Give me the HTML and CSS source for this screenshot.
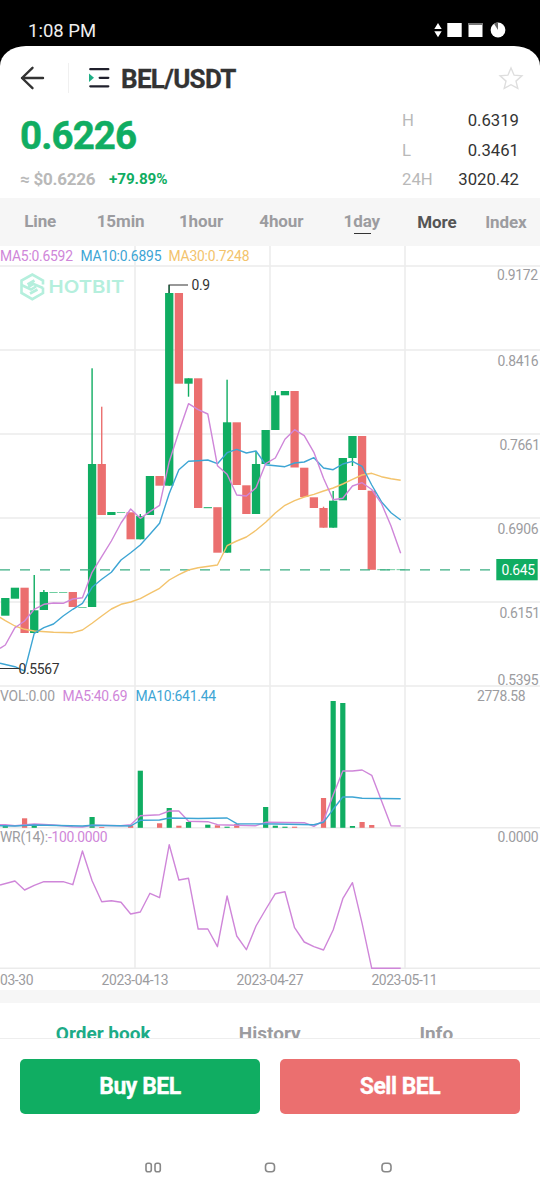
FILE: index.html
```html
<!DOCTYPE html>
<html lang="en">
<head>
    <meta charset="UTF-8">
    <meta name="viewport" content="width=device-width, initial-scale=1.0">
    <title>BEL/USDT</title>
    <link rel="stylesheet" href="styles.css">
</head>
<body>
    <div class="status-bar">
        <span>1:08 PM</span>
        <svg width="76" height="18" viewBox="432 21 76 18" fill="#fff">
            <path d="M438 23l3.7 6h-7.4zM438 37.2l3.7-6h-7.4z"/>
            <rect x="447.3" y="23" width="14.4" height="14"/>
            <rect x="468.5" y="23" width="14" height="14"/>
            <rect x="468.5" y="23" width="14" height="2" fill="#777"/>
            <circle cx="498" cy="30" r="7.4"/>
            <path d="M498 30v-7.4a7.4 7.4 0 0 0-4 1.2z" fill="#666"/>
        </svg>
    </div>

    <div class="page">
        <div class="header">
            <svg class="back" width="26" height="26" viewBox="20 65 26 26">
                <path d="M43 78H22M32.5 67.8L22 78l10.500 10.200" fill="none" stroke="#333" stroke-width="2.400" stroke-linecap="round" stroke-linejoin="round"/>
            </svg>
            <span class="divider"></span>
            <svg class="list-icon" width="22" height="22" viewBox="88 67 22 22">
                <path d="M90.300 69.200h18M99.700 77.800h8.600M90.300 86.300h18" stroke="#20202c" stroke-width="2.300" stroke-linecap="round"/>
                <path d="M89 73.500l5 4.300-5 4.300z" fill="#1fae85"/>
            </svg>
            <h1>BEL/USDT</h1>
            <svg class="star" width="26" height="26" viewBox="498 65 26 26">
                <path d="M511 68l3.100 7.200 7.800.7-5.900 5.200 1.800 7.200-6.800-3.600-6.800 3.600 1.800-7.200-5.900-5.200 7.800-.7z" fill="none" stroke="#dedede" stroke-width="1.400"/>
            </svg>
        </div>

        <div class="ticker">
            <div>
                <div class="price">0.6226</div>
                <div class="change"><span class="usd">≈ $0.6226</span><span class="percent">+79.89%</span></div>
            </div>
            <div class="stats">
                <div><span>H</span><b>0.6319</b></div>
                <div><span>L</span><b>0.3461</b></div>
                <div><span>24H</span><b>3020.42</b></div>
            </div>
        </div>

        <div class="periods">
            <span>Line</span>
            <span>15min</span>
            <span>1hour</span>
            <span>4hour</span>
            <span class="active">1day</span>
            <span class="more">More</span>
            <span class="index">Index</span>
        </div>

        <svg class="chart" width="540" height="744" viewBox="0 246 540 744">
            <g class="grid">
                <path d="M0 266H540M0 350H540M0 434H540M0 518H540M0 602H540M0 686H540M0 827.800H540M0 968.300H540"/>
                <path d="M135 246V968M270 246V968M405 246V968"/>
            </g>

            <g class="logo">
                <path d="M43 284.500V280.500L32.300 274.500 21.500 280.500V293L32.300 299.200 43 293V287.500"/>
                <path d="M21.500 285L31 289.500 36 286.500M27.500 284.500L34.500 280.500M43 288L33.500 284 28.500 287M37.500 289.500L30 293.500"/>
                <text x="48.500" y="293.300" textLength="76" lengthAdjust="spacingAndGlyphs">HOTBIT</text>
            </g>

            <g id="candles"></g>
            <g id="volumes"></g>
            <path class="current" d="M0 569.800H490"/>
            <g id="lines"></g>

            <path class="mark" d="M169 293V285H188M0 668.500H19"/>
            <text class="mark-text" x="191.500" y="290" textLength="18.500">0.9</text>
            <text class="mark-text" x="18.500" y="673.800" textLength="41">0.5567</text>

            <text class="purple" x="0" y="261.200" textLength="73">MA5:0.6592</text>
            <text class="blue" x="80.500" y="261.200" textLength="81">MA10:0.6895</text>
            <text class="yellow" x="168.500" y="261.200" textLength="81">MA30:0.7248</text>

            <text x="497" y="280" textLength="41">0.9172</text>
            <text x="497.500" y="366.300" textLength="41">0.8416</text>
            <text x="499.500" y="450.300" textLength="40.500">0.7661</text>
            <text x="497.500" y="534.300" textLength="41">0.6906</text>
            <text x="499.500" y="618.300" textLength="40.500">0.6151</text>
            <text x="497.500" y="685.300" textLength="41">0.5395</text>
            <rect class="tag" x="496.300" y="559" width="41.400" height="21.300"/>
            <text class="tag-text" x="501.500" y="575" textLength="33.500">0.645</text>

            <text x="0" y="701.300" textLength="55">VOL:0.00</text>
            <text class="purple" x="62.500" y="701.300" textLength="65">MA5:40.69</text>
            <text class="blue" x="135.500" y="701.300" textLength="80.500">MA10:641.44</text>
            <text x="477" y="701.300" textLength="48.500">2778.58</text>

            <text x="0" y="841.500" textLength="48">WR(14):</text>
            <text class="purple" x="48" y="841.500" textLength="59.500">-100.0000</text>
            <text x="497.500" y="841.500" textLength="41">0.0000</text>

            <text x="0" y="984.500" textLength="33.500">03-30</text>
            <text x="101.500" y="984.500" textLength="67">2023-04-13</text>
            <text x="236.500" y="984.500" textLength="67">2023-04-27</text>
            <text x="371.500" y="984.500" textLength="66">2023-05-11</text>
        </svg>

        <div class="tabs">
            <span class="active">Order book</span>
            <span>History</span>
            <span>Info</span>
        </div>

        <div class="actions">
            <button class="buy">Buy BEL</button>
            <button class="sell">Sell BEL</button>
        </div>

        <svg class="nav-bar" width="540" height="20" viewBox="0 1157 540 20">
            <rect x="146" y="1163.300" width="5.300" height="8.400" rx="2"/>
            <rect x="155" y="1163.300" width="5.300" height="8.400" rx="2"/>
            <rect x="265.500" y="1163.300" width="9" height="8.400" rx="3"/>
            <rect x="382" y="1163.300" width="9" height="8.400" rx="3"/>
        </svg>
    </div>

    <script src="chart.js"></script>
</body>
</html>
```

FILE: styles.css
```css
* { box-sizing: border-box; }
body {
    margin: 0;
    width: 540px;
    height: 1200px;
    overflow: hidden;
    background: #000;
    font-family: Roboto, sans-serif;
    color: #333;
}
svg { display: block; flex: none; }
.status-bar {
    height: 46px;
    padding: 15px 32px 0 28px;
    display: flex;
    justify-content: space-between;
    color: #eee;
    font-size: 18.5px;
    line-height: 32px;
}
.status-bar svg { margin-top: 6px; }
.page {
    height: 1154px;
    background: #fff;
    border-radius: 26px 26px 0 0 / 20px 20px 0 0;
    overflow: hidden;
}
.header {
    height: 62px;
    padding: 2px 16px 0 20px;
    display: flex;
    align-items: center;
}
.divider { width: 1px; height: 30px; margin: 0 19px 0 22px; background: #f0f0f0; }
.header h1 {
    flex: 1;
    margin: 2px 0 0 11px;
    font-size: 26px;
    line-height: 32px;
    letter-spacing: -0.7px;
    -webkit-text-stroke: 0.3px;
}
.ticker {
    height: 90px;
    padding: 0 21px 0 20px;
    display: flex;
    justify-content: space-between;
}
.price {
    margin-top: 5px;
    color: #10ad62;
    font-size: 38.5px;
    font-weight: bold;
    line-height: 46px;
    letter-spacing: -0.9px;
    -webkit-text-stroke: 0.5px;
}
.change { display: flex; margin-top: 8px; font-weight: bold; line-height: 24px; }
.usd { width: 89px; color: #b9b9b9; font-size: 17px; letter-spacing: -0.25px; white-space: nowrap; }
.percent { color: #10ad62; font-size: 15.3px; letter-spacing: -0.1px; line-height: 25px; }
.stats { width: 117px; }
.stats div {
    display: flex;
    justify-content: space-between;
    height: 29.5px;
    line-height: 25px;
    font-size: 16.7px;
}
.stats span { color: #b9b9b9; }
.stats b { font-weight: normal; }
.periods {
    height: 48px;
    padding-top: 2px;
    display: flex;
    background: #f6f6f6;
    color: #9c9ca0;
    font-size: 17px;
    font-weight: bold;
    line-height: 42px;
    letter-spacing: -0.1px;
    text-align: center;
}
.periods span { width: 80.4px; }
.periods .active { position: relative; }
.periods .active::after {
    content: "";
    position: absolute;
    left: 32px;
    bottom: 12px;
    width: 17px;
    height: 1.5px;
    background: #333;
}
.periods .more { width: 70px; color: #555; line-height: 44px; }
.periods .index { width: 68px; line-height: 44px; }
.chart { font-size: 13.9px; fill: #9c9ca0; }
.grid path { stroke: #ebebeb; stroke-width: 1.5; }
.logo path { fill: none; stroke: #b5efdd; stroke-width: 2.6; }
.logo text { fill: #b5efdd; font-family: Inter, sans-serif; font-size: 17.6px; font-weight: 600; }
.green { fill: #10ad62; }
.red { fill: #eb6f6f; }
.purple { fill: #cf86d9; }
.blue { fill: #3da5d4; }
.yellow { fill: #f3c36c; }
.line { fill: none; stroke-width: 1.4; stroke-linejoin: round; }
.line.purple { stroke: #cf86d9; }
.line.blue { stroke: #3da5d4; }
.line.yellow { stroke: #f3c36c; }
.current { stroke: #3aae82; stroke-width: 1.2; stroke-dasharray: 10 10; }
.mark { fill: none; stroke: #333; stroke-width: 1.1; }
.mark-text { fill: #333; }
.tag { fill: #10ad62; }
.chart .tag-text { fill: #fff; }
.tabs {
    height: 48px;
    border-top: 13px solid #f6f6f6;
    padding: 17px 0 0 20px;
    display: flex;
    overflow: hidden;
    color: #9c9ca0;
    font-size: 19px;
    font-weight: bold;
    line-height: 28px;
    text-align: center;
}
.tabs span { width: 166.5px; }
.tabs .active { color: #1dab87; }
.actions {
    height: 119px;
    padding: 20px 20px 0;
    display: flex;
    gap: 20px;
    border-top: 1px solid #eee;
}
.actions button {
    flex: 1;
    height: 55px;
    border: 0;
    border-radius: 5px;
    color: #fff;
    font: bold 23px Roboto, sans-serif;
    letter-spacing: -0.5px;
    -webkit-text-stroke: 0.3px;
}
.actions .buy { background: #10ad62; }
.actions .sell { background: #eb6f6f; }
.nav-bar { fill: none; stroke: #888; stroke-width: 1.6; }
```

FILE: chart.js
```javascript
const START = 5.3;
const STEP = 9.643;
const VOLUME_BASE = 827.8;

// [color, body top, body bottom, wick top, wick bottom]
const candles = [
    ["green", 598, 615.7], ["green", 587.7, 598.7], ["red", 587.7, 633],
    ["green", 610.3, 633, 575, 633], ["green", 592, 610, 590, 610],
    ["green", 592, 592.6], ["green", 592, 592.6], ["red", 592, 607],
    ["green", 607, 607.6], ["green", 464, 607, 368.3, 607],
    ["red", 464, 515, 406.7, 515], ["green", 512, 515], ["green", 512, 512.6],
    ["red", 512.3, 539.3], ["green", 516, 539.3, 514, 539.3],
    ["green", 476, 515], ["red", 476, 485.7], ["green", 293, 485.7, 285, 485.7],
    ["red", 293, 383.7], ["green", 378.3, 383.7, 378.3, 396.7],
    ["red", 378.3, 508], ["green", 507.2, 508.2], ["red", 507.2, 552.7],
    ["green", 422.3, 552.7, 379.7, 552.7], ["red", 422.3, 485],
    ["red", 485.3, 514], ["green", 464, 514, 451, 514], ["green", 430, 464],
    ["green", 395.3, 430, 391, 430], ["green", 391, 395.3], ["red", 391, 467.5],
    ["red", 467.7, 497], ["red", 497.3, 508], ["red", 508, 527.7, 506.7, 527.7],
    ["green", 500.7, 527.7, 491, 527.7], ["green", 458, 500.3],
    ["green", 436, 458, 436, 466], ["red", 436, 490], ["red", 490.7, 569.8],
    ["green", 569.5, 570.1], ["green", 569.5, 570.1], ["green", 569.5, 570.1]
];

// candle index: [color, bar top]
const volumes = {
    0: ["green", 825.5], 2: ["red", 818.3], 3: ["green", 826], 9: ["green", 817],
    10: ["red", 827], 13: ["red", 825.3], 14: ["green", 770.7], 16: ["red", 823.3],
    17: ["green", 808], 18: ["red", 825.7], 19: ["green", 822], 21: ["green", 824.7],
    22: ["red", 825.3], 23: ["green", 826.7], 24: ["red", 824], 27: ["green", 807],
    28: ["green", 825.7], 29: ["green", 826.7], 30: ["red", 826.7], 33: ["red", 798],
    34: ["green", 701], 35: ["green", 703], 36: ["green", 826], 37: ["red", 822],
    38: ["red", 825]
};

// [color, y at left edge, [index, y], ...]
const lines = [
    ["yellow", 617.3, [0, 620.7], [1, 626], [2, 629.3], [3, 631], [5, 632.3], [7, 632.7],
        [8, 630], [9, 623.3], [10, 616], [11, 609], [12, 604.3], [13, 602], [14, 598.7],
        [15, 593.3], [16, 588.3], [17, 580], [18, 574.7], [19, 570], [20, 567.7], [22, 565],
        [23, 545.7], [24, 541], [25, 537], [26, 530.3], [27, 522.3], [28, 513], [29, 505.3],
        [30, 500.7], [31, 497], [32, 494.3], [33, 491], [34, 488], [35, 484], [36, 479.3],
        [37, 475], [38, 473.3], [39, 476.7], [40, 478.7], [41, 480.3]],
    ["blue", 663.3, [1, 666.7], [2, 671], [3, 633.3], [4, 627.7], [5, 624], [6, 616],
        [7, 609.3], [8, 603.3], [9, 587.3], [10, 579.3], [11, 572.3], [12, 560], [13, 552.7],
        [14, 545], [15, 534.3], [16, 523.3], [17, 493.5], [18, 469.7], [19, 461.3],
        [20, 460.7], [21, 460], [22, 463.7], [23, 452.7], [24, 449.3], [25, 453], [26, 451],
        [27, 464.7], [28, 465.7], [29, 466.7], [30, 463], [31, 462], [32, 457.7], [33, 468],
        [34, 469.7], [35, 464], [36, 461.3], [37, 466.3], [38, 485], [39, 501.7],
        [40, 512.7], [41, 520]],
    ["purple", 648.3, [0, 645], [1, 627.7], [2, 621], [3, 609.3], [4, 604.3], [5, 603],
        [6, 603.3], [7, 599], [8, 597.7], [9, 572.3], [10, 556.7], [11, 541], [12, 523],
        [13, 509], [14, 518.3], [15, 511.7], [16, 505.3], [17, 461.7], [18, 431.7],
        [19, 403.7], [20, 409.7], [21, 414], [22, 465.7], [23, 474.3], [24, 495], [25, 496],
        [26, 487.7], [27, 463.7], [28, 458], [29, 439.3], [30, 429.7], [31, 435.7],
        [32, 452.3], [33, 478.3], [34, 499.7], [35, 498.3], [36, 486], [37, 482.7],
        [38, 489.5], [39, 503.3], [40, 526], [41, 553.3]],
    ["purple", 824.7, [0, 824.7], [1, 825.7], [3, 824], [5, 825], [7, 826.7], [8, 827],
        [9, 825.3], [12, 825.7], [13, 824.7], [14, 815.7], [15, 815.3], [16, 814.7],
        [17, 811], [18, 811], [19, 821.3], [21, 821.7], [22, 824.7], [23, 825],
        [26, 825.7], [27, 822.3], [31, 822.7], [32, 826.3], [33, 820.7], [34, 795],
        [35, 771], [36, 771], [37, 770], [38, 775.3], [40, 825.7], [41, 826]],
    ["blue", 825.7, [1, 826], [3, 825], [8, 826], [9, 825.3], [13, 826], [14, 820.3],
        [16, 820], [17, 818], [20, 818.5], [23, 818], [24, 823.7], [28, 824], [32, 824.7],
        [33, 822.3], [34, 809.3], [35, 797], [36, 797], [37, 798.3], [41, 798.7]],
    ["purple", 885, [1, 881], [2, 890], [3, 885.3], [4, 881.7], [6, 881.7], [7, 884.7],
        [8, 851], [9, 880.7], [10, 901.7], [11, 900.7], [12, 902.3], [13, 914], [14, 912],
        [15, 893.3], [16, 897.7], [17, 844.7], [18, 880], [19, 878.3], [20, 929], [21, 929],
        [22, 946.7], [23, 896], [24, 936], [25, 949.7], [26, 926], [27, 909.5], [28, 893.7],
        [29, 891.7], [30, 927.7], [31, 942], [32, 946.7], [33, 950], [34, 930], [35, 898.7],
        [36, 882.7], [37, 923.3], [38, 968.3], [41, 968.3]]
];

function add(parent, tag, attrs) {
    const el = document.createElementNS("http://www.w3.org/2000/svg", tag);
    for (const name in attrs) {
        el.setAttribute(name, attrs[name]);
    }
    document.getElementById(parent).appendChild(el);
}

function centerX(i) {
    return START + i * STEP;
}

function addBar(parent, color, x, top, bottom, width) {
    add(parent, "rect", { class: color, x: x - width / 2, y: top, width: width, height: bottom - top });
}

candles.forEach(([color, top, bottom, wickTop, wickBottom], i) => {
    addBar("candles", color, centerX(i), top, bottom, 8.3);
    if (wickTop) {
        addBar("candles", color, centerX(i), wickTop, wickBottom, 1.4);
    }
});

for (const i in volumes) {
    addBar("volumes", volumes[i][0], centerX(Number(i)), volumes[i][1], VOLUME_BASE, 5.2);
}

lines.forEach(([color, startY, ...points]) => {
    const path = points.map(([i, y]) => "L" + centerX(i) + " " + y).join("");
    add("lines", "path", { class: "line " + color, d: "M0 " + startY + path });
});
```
